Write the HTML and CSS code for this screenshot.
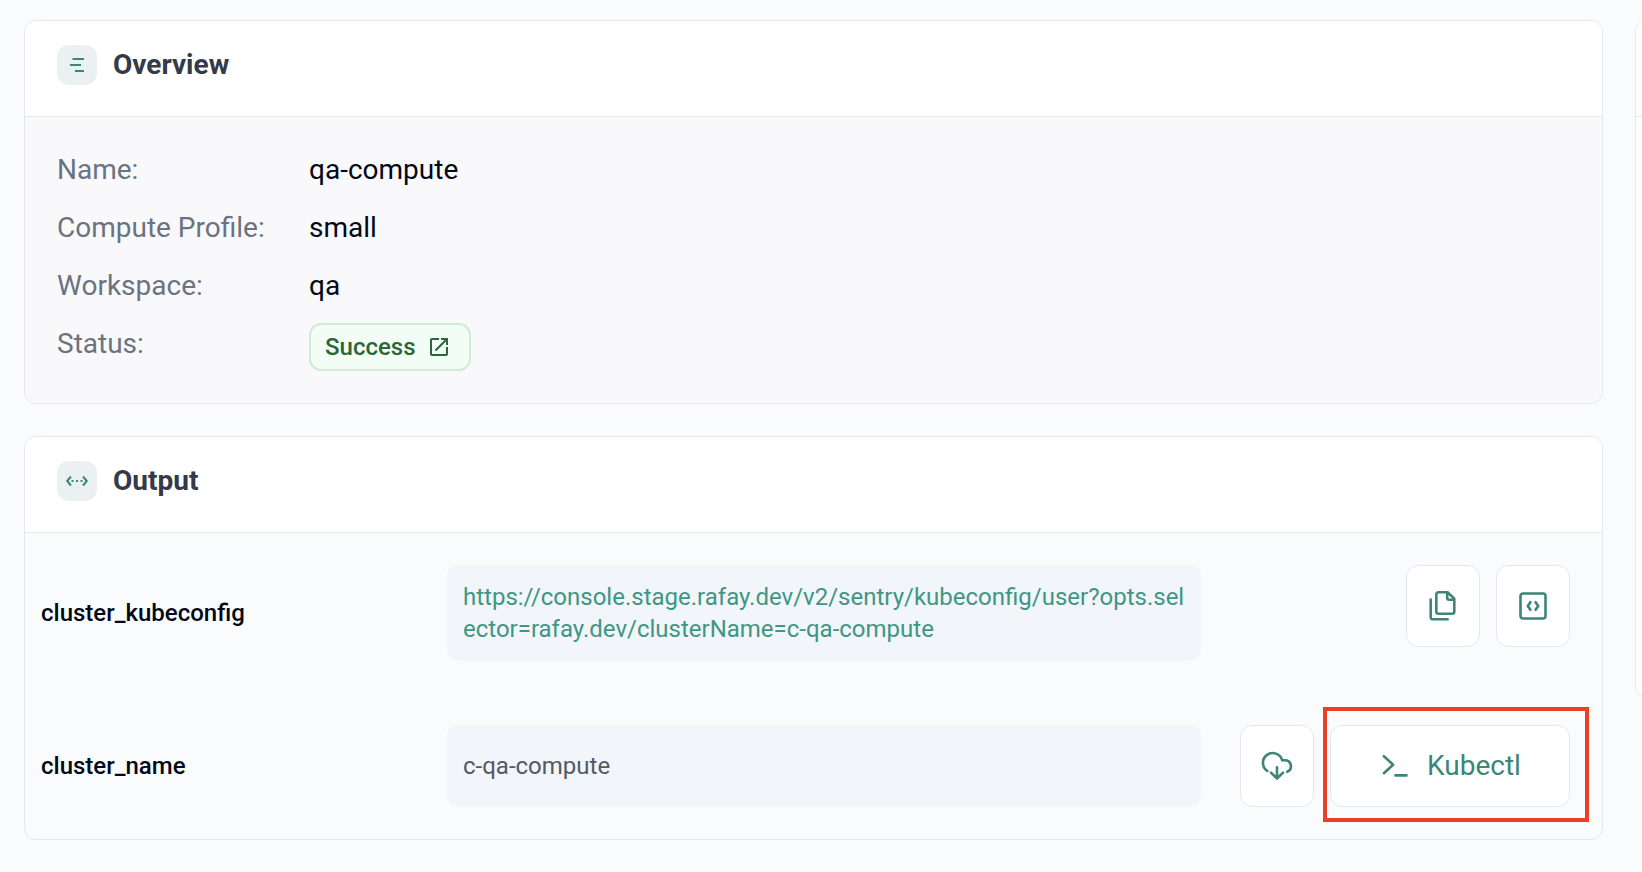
FILE: index.html
```html
<!DOCTYPE html>
<html lang="en">
<head>
  <meta charset="utf-8">
  <meta name="viewport" content="width=device-width, initial-scale=1">
  <title>qa-compute</title>
  <link rel="stylesheet" href="styles.css">
</head>
<body>
  <div class="page">
    <main class="main">
      <section class="card">
        <header class="card-header">
          <span class="card-icon">
            <svg class="icon-sm" viewBox="0 0 24 24" aria-hidden="true"><path d="M7.500 6H19M5 12h11M10 18h9" fill="none" stroke="currentColor" stroke-width="2"/></svg>
          </span>
          <h2 class="card-title">Overview</h2>
        </header>
        <dl class="overview">
          <dt>Name:</dt>
          <dd>qa-compute</dd>
          <dt>Compute Profile:</dt>
          <dd>small</dd>
          <dt>Workspace:</dt>
          <dd>qa</dd>
          <dt>Status:</dt>
          <dd>
            <a class="badge" href="#status">Success
              <svg class="icon-sm" viewBox="0 0 24 24" aria-hidden="true"><path fill="currentColor" d="M19 19H5V5h7V3H5c-1.110 0-2 .9-2 2v14c0 1.100.890 2 2 2h14c1.100 0 2-.9 2-2v-7h-2zM14 3v2h3.590l-9.830 9.830 1.410 1.410L19 6.410V10h2V3z"/></svg>
            </a>
          </dd>
        </dl>
      </section>

      <section class="card" id="status">
        <header class="card-header">
          <span class="card-icon">
            <svg class="icon-sm" viewBox="0 0 24 24" aria-hidden="true"><path d="M6 7.500 2.200 12 6 16.500M18 7.500l3.800 4.500-3.800 4.500" fill="none" stroke="currentColor" stroke-width="2"/><path d="M6.500 11h2v2h-2zM11 11h2v2h-2zM15.500 11h2v2h-2z" fill="currentColor"/></svg>
          </span>
          <h2 class="card-title">Output</h2>
        </header>
        <div class="output">
          <div class="output-row">
            <span class="output-label">cluster_kubeconfig</span>
            <div class="output-value">
              <a class="output-link" href="#kubeconfig">https://console.stage.rafay.dev/v2/sentry/kubeconfig/user?opts.selector=rafay.dev/clusterName=c-qa-compute</a>
            </div>
            <div class="actions">
              <button class="btn" type="button" aria-label="Copy">
                <svg class="icon" viewBox="0 0 32 32" aria-hidden="true"><path d="M20.500 2.200H11.500a2.200 2.200 0 0 0-2.200 2.200v17.200a2.200 2.200 0 0 0 2.200 2.200h13.600a2.200 2.200 0 0 0 2.200-2.200V8.600zM20.200 2.500v5.200a2 2 0 0 0 2 2h5M3.700 9.500v17.800a2 2 0 0 0 2 2h15"/></svg>
              </button>
              <button class="btn" type="button" aria-label="View code">
                <svg class="icon" viewBox="0 0 32 32" aria-hidden="true"><rect x="3.500" y="3.500" width="25" height="25" rx="2.500"/><path d="m13.400 12.200-2.600 3.800 2.600 3.800M18.600 12.200l2.600 3.800-2.600 3.800"/></svg>
              </button>
            </div>
          </div>
          <div class="output-row">
            <span class="output-label">cluster_name</span>
            <div class="output-value">c-qa-compute</div>
            <div class="actions">
              <button class="btn" type="button" aria-label="Download">
                <svg class="icon" viewBox="0 0 32 32" aria-hidden="true"><path d="M6.300 21A9.800 9.800 0 1 1 21.200 10.300H24a6 6 0 0 1 2.300 11.500M16 17.300v11M10 22.600l6 5.900 6-5.900"/></svg>
              </button>
              <div class="highlighted">
                <button class="btn btn-wide" type="button">
                  <svg class="icon" viewBox="0 0 32 32" aria-hidden="true"><path d="m4.900 6.200 9.200 8.500-9.200 8.500M16.500 25.400h11"/></svg>
                  Kubectl
                </button>
                <span class="highlight"></span>
              </div>
            </div>
          </div>
        </div>
      </section>
    </main>

    <aside class="side">
      <div class="card side-card">
        <div class="card-header"></div>
      </div>
    </aside>
  </div>
</body>
</html>
```

FILE: styles.css
```css
*,
*::before,
*::after {
  box-sizing: border-box;
}

body {
  margin: 0;
  min-height: 100vh;
  background: #fafbfd;
  color: #020817;
  font-family: Roboto, "Liberation Sans", sans-serif;
  font-size: 28px;
  line-height: 42px;
}

.page {
  display: grid;
  grid-template-columns: minmax(0, 1fr) 7px;
  align-items: start;
  gap: 32px;
  padding: 20px 0 32px 24px;
}

.main {
  display: flex;
  flex-direction: column;
  gap: 32px;
}

.card {
  border: 1px solid #e2e8f0;
  border-radius: 12px;
}

.card-header {
  display: flex;
  align-items: flex-start;
  gap: 16px;
  min-height: 96px;
  padding: 24px 32px;
  border-bottom: 1px solid #e2e8f0;
  border-radius: 11px 11px 0 0;
  background: #fff;
}

.card-icon {
  display: grid;
  place-items: center;
  width: 40px;
  height: 40px;
  border-radius: 12px;
  background: #ebf1f1;
  color: #3d8577;
}

.card-title {
  margin: 0;
  color: #343a48;
  font-size: 28px;
  font-weight: 700;
  line-height: 40px;
}

.side {
  overflow: hidden;
}

.side-card {
  width: 480px;
  min-height: 678px;
  background: #fff;
}

.overview {
  display: grid;
  grid-template-columns: 236px 1fr;
  gap: 16px;
  margin: 0;
  padding: 32px;
  border-radius: 0 0 11px 11px;
  background: #f9f9fb;
}

.overview dt {
  color: #6b7280;
  white-space: nowrap;
}

.overview dd {
  margin: 0;
}

.badge {
  display: flex;
  align-items: center;
  gap: 11px;
  width: fit-content;
  height: 48px;
  padding: 0 18px 0 14px;
  border: 2px solid #cfead6;
  border-radius: 12px;
  background: #f2fdf5;
  color: #2c6638;
  font-size: 24px;
  font-weight: 500;
  line-height: 32px;
  text-decoration: none;
}

.output {
  display: flex;
  flex-direction: column;
  gap: 64px;
  padding: 32px 32px 32px 16px;
  font-size: 24px;
  line-height: 32px;
}

.output-row {
  display: grid;
  grid-template-columns: 406fr 754fr 369fr;
  align-items: center;
}

.output-label {
  font-weight: 500;
}

.output-value {
  display: flex;
  align-items: center;
  min-height: 82px;
  padding: 16px;
  border-radius: 12px;
  background: #f2f5fa;
  color: #545966;
}

.output-link {
  color: #409684;
  text-decoration: none;
  word-break: break-all;
}

.actions {
  display: flex;
  align-self: start;
  justify-content: flex-end;
  gap: 16px;
}

.btn {
  display: flex;
  align-items: center;
  justify-content: center;
  gap: 16px;
  width: 74px;
  height: 82px;
  padding: 0;
  border: 1px solid #e2e8f0;
  border-radius: 12px;
  background: #fff;
  color: #3d8577;
  font: inherit;
  font-size: 28px;
  cursor: pointer;
}

.btn-wide {
  width: 240px;
}

.highlighted {
  position: relative;
}

.highlight {
  position: absolute;
  inset: -18px -19px -15px -7px;
  border: 4px solid #eb3f27;
  pointer-events: none;
}

.icon {
  width: 32px;
  height: 32px;
  fill: none;
  stroke: currentColor;
  stroke-width: 2.6;
  stroke-linecap: round;
  stroke-linejoin: round;
}

.icon-sm {
  width: 24px;
  height: 24px;
}
```
